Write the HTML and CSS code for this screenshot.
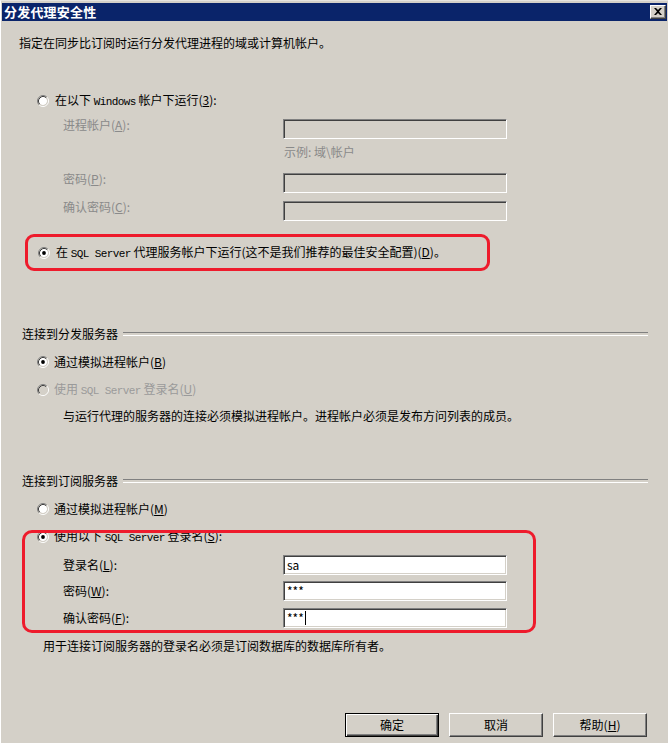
FILE: index.html
```html
<!DOCTYPE html>
<html lang="zh-CN">
<head>
<meta charset="utf-8">
<title>分发代理安全性</title>
<link rel="stylesheet" href="styles.css">
</head>
<body>
<svg class="defs" width="0" height="0" aria-hidden="true">
  <defs>
    <g id="radio-base">
      <path d="M2.11 9.89 A5.5 5.5 0 0 1 9.89 2.11" fill="none" stroke="#808080" stroke-width="1"/>
      <path d="M9.89 2.11 A5.5 5.5 0 0 1 2.11 9.89" fill="none" stroke="#ffffff" stroke-width="1"/>
      <path d="M2.82 9.18 A4.5 4.5 0 0 1 9.18 2.82" fill="none" stroke="#404040" stroke-width="1"/>
      <path d="M9.18 2.82 A4.5 4.5 0 0 1 2.82 9.18" fill="none" stroke="#d4d0c8" stroke-width="1"/>
    </g>
  </defs>
</svg>
<div class="window">
  <div class="titlebar">
    <span class="title">分发代理安全性</span>
    <span class="close"><svg width="8" height="7" viewBox="0 0 8 7"><path d="M0 0 L2 0 L4 2 L6 0 L8 0 L5 3.5 L8 7 L6 7 L4 5 L2 7 L0 7 L3 3.5 Z" fill="#000"/></svg></span>
  </div>

  <div class="content">
    <p class="intro">指定在同步比订阅时运行分发代理进程的域或计算机帐户。</p>

    <div class="radio r-top">
      <svg class="rb" width="12" height="12" viewBox="0 0 12 12"><circle cx="6" cy="6" r="4" fill="#fff"/><use href="#radio-base"/></svg>
      <span>在以下 <span class="lat">Windows</span> 帐户下运行(<u>3</u>):</span>
    </div>

    <div class="field top f1">
      <span class="lbl dis">进程帐户(<u>A</u>):</span>
      <span class="input dis"></span>
    </div>
    <div class="hint">示例: 域\帐户</div>
    <div class="field top f2">
      <span class="lbl dis">密码(<u>P</u>):</span>
      <span class="input dis"></span>
    </div>
    <div class="field top f3">
      <span class="lbl dis">确认密码(<u>C</u>):</span>
      <span class="input dis"></span>
    </div>

    <div class="mark1">
      <div class="radio r-agent">
        <svg class="rb" width="12" height="12" viewBox="0 0 12 12"><circle cx="6" cy="6" r="4" fill="#fff"/><use href="#radio-base"/><circle cx="6" cy="6" r="1.9" fill="#000"/></svg>
        <span>在 <span class="lat">SQL Server</span> 代理服务帐户下运行(这不是我们推荐的最佳安全配置)(<u>D</u>)。</span>
      </div>
    </div>

    <div class="group g1">连接到分发服务器</div>
    <div class="radio r-sub rb1">
      <svg class="rb" width="12" height="12" viewBox="0 0 12 12"><circle cx="6" cy="6" r="4" fill="#fff"/><use href="#radio-base"/><circle cx="6" cy="6" r="1.9" fill="#000"/></svg>
      <span>通过模拟进程帐户(<u>B</u>)</span>
    </div>
    <div class="radio r-sub rb2">
      <svg class="rb" width="12" height="12" viewBox="0 0 12 12"><circle cx="6" cy="6" r="4" fill="#d4d0c8"/><use href="#radio-base"/></svg>
      <span class="dis2">使用 <span class="lat">SQL Server</span> 登录名(<u>U</u>)</span>
    </div>
    <p class="note n1">与运行代理的服务器的连接必须模拟进程帐户。进程帐户必须是发布方问列表的成员。</p>

    <div class="group g2">连接到订阅服务器</div>
    <div class="radio r-sub rb3">
      <svg class="rb" width="12" height="12" viewBox="0 0 12 12"><circle cx="6" cy="6" r="4" fill="#fff"/><use href="#radio-base"/></svg>
      <span>通过模拟进程帐户(<u>M</u>)</span>
    </div>

    <div class="mark2">
      <div class="radio r-sub rb4">
        <svg class="rb" width="12" height="12" viewBox="0 0 12 12"><circle cx="6" cy="6" r="4" fill="#fff"/><use href="#radio-base"/><circle cx="6" cy="6" r="1.9" fill="#000"/></svg>
        <span>使用以下 <span class="lat">SQL Server</span> 登录名(<u>S</u>):</span>
      </div>
      <div class="field bot b1">
        <span class="lbl">登录名(<u>L</u>):</span>
        <span class="input"><span class="val">sa</span></span>
      </div>
      <div class="field bot b2">
        <span class="lbl">密码(<u>W</u>):</span>
        <span class="input"><span class="val">***</span></span>
      </div>
      <div class="field bot b3">
        <span class="lbl">确认密码(<u>F</u>):</span>
        <span class="input"><span class="val">***</span><span class="caret"></span></span>
      </div>
    </div>

    <p class="note n2">用于连接订阅服务器的登录名必须是订阅数据库的数据库所有者。</p>

    <div class="buttons">
      <button class="btn default">确定</button>
      <button class="btn">取消</button>
      <button class="btn">帮助(<u>H</u>)</button>
    </div>
  </div>
</div>
</body>
</html>
```

FILE: styles.css
```css
* { box-sizing: border-box; }

html, body {
  margin: 0;
  padding: 0;
  background: #d4d0c8;
}

body {
  width: 668px;
  height: 743px;
  overflow: hidden;
  font-family: "Noto Sans CJK SC", "Noto Sans", sans-serif;
  font-size: 12px;
  color: #000;
}

.defs { position: absolute; width: 0; height: 0; }

.window {
  width: 668px;
  height: 743px;
  padding-top: 3px;
  background: #d4d0c8;
  border-left: 1px solid #ffffff;
  border-top: 1px solid #e6e4df;
}

.titlebar {
  height: 18px;
  margin: -1px 1px 0 1px;
  background: #0a246a;
  display: flex;
  align-items: center;
  justify-content: space-between;
  padding: 0 1px 0 2px;
}

.title {
  color: #fff;
  font-weight: 700;
  font-size: 13px;
  line-height: 18px;
  letter-spacing: 0.2px;
}

.close {
  width: 16px;
  height: 14px;
  background: #d4d0c8;
  border-top: 1px solid #fff;
  border-left: 1px solid #fff;
  border-right: 1px solid #404040;
  border-bottom: 1px solid #404040;
  box-shadow: inset -1px -1px 0 #808080;
  display: flex;
  align-items: center;
  justify-content: center;
  padding: 0 1px 1px 0;
}

.close svg { display: block; }

.content { margin-left: -1px; }

p { margin: 0; }

.lat {
  font-family: "Liberation Mono", monospace;
  font-size: 11px;
  letter-spacing: -0.6px;
}

u { text-decoration: underline; text-underline-offset: 1px; }

.intro {
  margin: 14px 0 0 19px;
  height: 16px;
  line-height: 16px;
}

.radio {
  display: flex;
  align-items: center;
  height: 16px;
  line-height: 16px;
  padding-left: 37px;
  gap: 6px;
  white-space: nowrap;
}

.radio .rb { display: block; flex: none; }

.r-top { margin-top: 42px; }

.field {
  display: flex;
  height: 20px;
  padding-left: 63px;
}

.field .lbl {
  width: 220px;
  flex: none;
}

.field.top { align-items: flex-start; }
.field.top .lbl { line-height: 12px; }
.field.bot { align-items: center; }
.field.bot .lbl { line-height: 16px; }

.dis { color: #8a8a8a; }
.dis2 { color: #9a9a9a; }

.input {
  width: 224px;
  height: 20px;
  flex: none;
  background: #fff;
  border-top: 1px solid #808080;
  border-left: 1px solid #808080;
  border-right: 1px solid #fff;
  border-bottom: 1px solid #fff;
  box-shadow: inset 1px 1px 0 #404040, inset -1px -1px 0 #d4d0c8;
  display: flex;
  align-items: center;
  padding-left: 3px;
  line-height: 16px;
}

.input.dis { background: #d4d0c8; }

.val { font-size: 12px; }

.caret {
  width: 1px;
  height: 14px;
  background: #000;
  margin-left: 1px;
}

.f1 { margin-top: 10px; }

.hint {
  margin: 7px 0 0 284px;
  line-height: 12px;
  height: 12px;
  color: #8a8a8a;
}

.f2 { margin-top: 15px; }
.f3 { margin-top: 8px; }

.mark1 {
  margin: 13px 0 0 25px;
  width: 465px;
  height: 37px;
  border: 3px solid #ee1b2c;
  border-radius: 9px;
  display: flex;
  align-items: center;
}

.mark1 .radio { padding-left: 10px; }

.group {
  display: flex;
  align-items: center;
  height: 16px;
  line-height: 16px;
  margin-left: 22px;
  margin-right: 20px;
}

.group::after {
  content: "";
  flex: 1;
  height: 2px;
  border-top: 1px solid #808080;
  border-bottom: 1px solid #fff;
  margin-left: 5px;
}

.g1 { margin-top: 55px; }

.r-sub { gap: 5px; }
.rb1 { margin-top: 12px; }
.rb2 { margin-top: 12px; }

.note {
  height: 16px;
  line-height: 16px;
}

.n1 { margin: 10px 0 0 63px; }

.g2 { margin-top: 49px; }
.rb3 { margin-top: 12px; }

.mark2 {
  position: relative;
  margin-top: 12px;
}

.mark2::after {
  content: "";
  position: absolute;
  left: 22px;
  width: 508px;
  top: 1px;
  bottom: -5px;
  border: 3px solid #ee1b2c;
  border-radius: 10px;
  pointer-events: none;
}

.b1 { margin-top: 10px; }
.b2 { margin-top: 6px; }
.b3 { margin-top: 7px; }

.n2 { margin: 10px 0 0 43px; }

.buttons {
  display: flex;
  justify-content: flex-end;
  gap: 10px;
  padding-right: 21px;
  margin-top: 59px;
}

.btn {
  width: 94px;
  height: 24px;
  font-family: "Noto Sans CJK SC", "Noto Sans", sans-serif;
  font-size: 12px;
  color: #000;
  background: #d4d0c8;
  border-top: 1px solid #fff;
  border-left: 1px solid #fff;
  border-right: 1px solid #404040;
  border-bottom: 1px solid #404040;
  box-shadow: inset -1px -1px 0 #808080;
  padding: 0;
  line-height: 20px;
}

.btn.default {
  border: 1px solid #000;
  box-shadow: inset 1px 1px 0 #fff, inset -1px -1px 0 #404040, inset -2px -2px 0 #808080;
}
```
